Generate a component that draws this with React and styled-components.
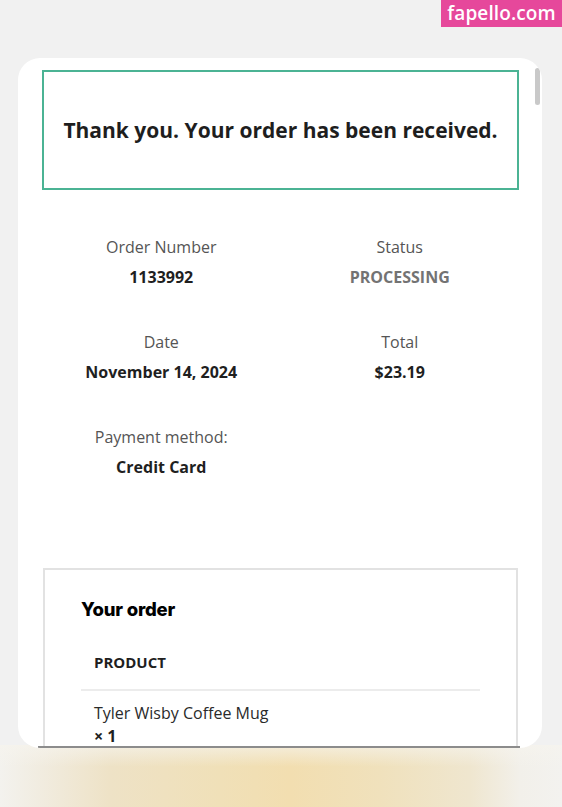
import React from "react";
import styled, { createGlobalStyle } from "styled-components";

// ===== global ======
const GlobalStyle = createGlobalStyle`
  body {
    margin: 0;
    background: #f1f1f1;
    font-family: "Open Sans", "Noto Sans", sans-serif;
  }
`;

// ===== style ======
const Page = styled.div`
  position: relative;
  width: 562px;
  height: 807px;
  overflow: hidden;
  display: flex;
  flex-direction: column;
  padding-top: 58px;
  box-sizing: border-box;
  background-color: #f1f1f1;
  background-image:
    linear-gradient(180deg, rgba(246, 244, 238, 0.7) 0%, rgba(246, 244, 238, 0) 35%),
    linear-gradient(90deg, #f3f2ee 0px, #f1ece0 40px, #eee2c6 110px, #f0e0b8 220px, #f2deb0 290px, #f0e1bc 380px, #efe6cf 470px, #f2f0ea 520px, #f3f2ef 562px);
  background-size: 562px 62px, 562px 62px;
  background-position: 0 745px, 0 745px;
  background-repeat: no-repeat;
`;

const Watermark = styled.div`
  position: absolute;
  top: 0;
  right: 0;
  width: 121px;
  height: 27px;
  background: #e6489b;
  color: #ffffff;
  font-size: 19px;
  font-weight: 600;
  line-height: 27px;
  text-align: center;
  letter-spacing: 0.1px;
`;

const Card = styled.div`
  position: relative;
  width: 524px;
  height: 690px;
  margin-left: 18px;
  border-radius: 22px;
  background: #ffffff;
  overflow: hidden;
  display: flex;
  flex-direction: column;
`;

const ScrollThumb = styled.div`
  position: absolute;
  top: 10px;
  right: 2px;
  width: 5px;
  height: 37px;
  border-radius: 3px;
  background: #c9c9c9;
`;

const Viewport = styled.div`
  flex: 1;
  overflow: hidden;
  padding: 12px 23px 0 24px;
`;

const BottomEdge = styled.div`
  height: 2px;
  margin: 0 22px 0 20px;
  background: #8c8c8c;
`;

const Notice = styled.div`
  height: 120px;
  box-sizing: border-box;
  border: 2px solid #4bb394;
  display: flex;
  align-items: center;
  justify-content: center;
  font-size: 21px;
  font-weight: 700;
  color: #1e1e1e;
`;

const DetailGrid = styled.div`
  display: grid;
  grid-template-columns: 1fr 1fr;
  row-gap: 35px;
  padding-top: 42px;
`;

const DetailItem = styled.div`
  display: flex;
  flex-direction: column;
  align-items: center;
  font-size: 16px;
  line-height: 30px;
`;

const DetailLabel = styled.span`
  color: #555555;
`;

const DetailValue = styled.span`
  font-weight: 700;
  color: ${(props) => props.color || "#1f1f1f"};
`;

const OrderBox = styled.div`
  margin: 86px 1px 0 1px;
  border: 2px solid #e2e2e2;
  border-bottom: 0;
  padding: 24px 36px 0 36px;
  min-height: 200px;
`;

const OrderTitle = styled.h2`
  margin: 0;
  font-family: "Inter", "Lato", sans-serif;
  font-size: 18.5px;
  font-weight: 800;
  letter-spacing: -0.2px;
  line-height: 30px;
  color: #000000;
`;

const OrderTable = styled.table`
  width: 100%;
  margin-top: 24px;
  border-collapse: collapse;
`;

const HeadCell = styled.th`
  text-align: left;
  padding: 0 13px 13px;
  font-size: 15px;
  font-weight: 700;
  line-height: 28px;
  color: #1f1f1f;
  border-bottom: 2px solid #ececec;
`;

const BodyCell = styled.td`
  padding: 10px 13px 0;
  font-size: 16px;
  line-height: 24px;
  color: #2a2a2a;
`;

const Qty = styled.strong`
  display: block;
  font-weight: 700;
  line-height: 22px;
  color: #1f1f1f;
`;

const details = [
  { label: "Order Number", value: "1133992" },
  { label: "Status", value: "PROCESSING", color: "#737373" },
  { label: "Date", value: "November 14, 2024" },
  { label: "Total", value: "$23.19" },
  { label: "Payment method:", value: "Credit Card" },
];

// ===== component ======
const App = () => {
  return (
    <>
      <GlobalStyle />
      <Page>
        <Watermark>fapello.com</Watermark>
        <Card>
          <ScrollThumb />
          <Viewport>
            <Notice>Thank you. Your order has been received.</Notice>
            {/* 주문 정보 */}
            <DetailGrid>
              {details.map((item) => (
                <DetailItem key={item.label}>
                  <DetailLabel>{item.label}</DetailLabel>
                  <DetailValue color={item.color}>{item.value}</DetailValue>
                </DetailItem>
              ))}
            </DetailGrid>
            {/* 주문 상품 */}
            <OrderBox>
              <OrderTitle>Your order</OrderTitle>
              <OrderTable>
                <thead>
                  <tr>
                    <HeadCell>PRODUCT</HeadCell>
                  </tr>
                </thead>
                <tbody>
                  <tr>
                    <BodyCell>
                      Tyler Wisby Coffee Mug
                      <Qty>× 1</Qty>
                    </BodyCell>
                  </tr>
                </tbody>
              </OrderTable>
            </OrderBox>
          </Viewport>
          <BottomEdge />
        </Card>
      </Page>
    </>
  );
};

export default App;
